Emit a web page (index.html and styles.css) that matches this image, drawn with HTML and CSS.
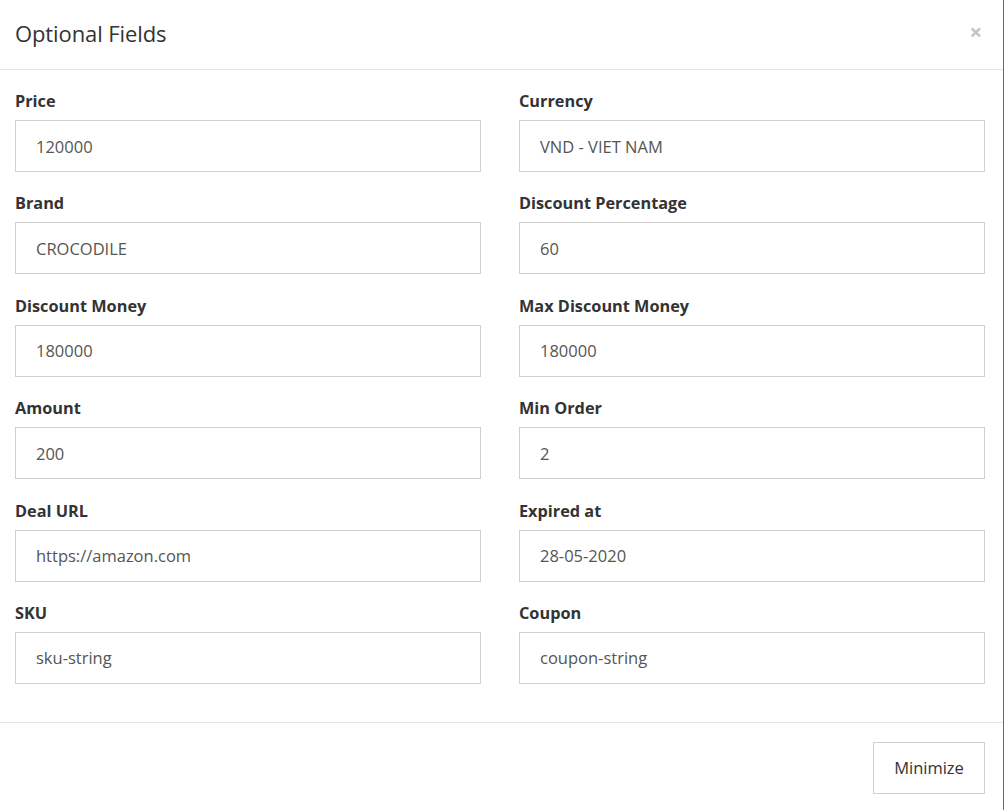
FILE: index.html
```html
<!DOCTYPE html>
<html>
<head>
<meta charset="utf-8">
<link rel="stylesheet" href="styles.css">
</head>
<body>
<div class="modal">
  <div class="modal-header">
    <h4 class="modal-title">Optional Fields</h4>
    <span class="close">&times;</span>
  </div>
  <div class="modal-body">
    <div class="field"><label>Price</label><div class="input">120000</div></div>
    <div class="field"><label>Currency</label><div class="input">VND - VIET NAM</div></div>
    <div class="field"><label>Brand</label><div class="input">CROCODILE</div></div>
    <div class="field"><label>Discount Percentage</label><div class="input">60</div></div>
    <div class="field"><label>Discount Money</label><div class="input">180000</div></div>
    <div class="field"><label>Max Discount Money</label><div class="input">180000</div></div>
    <div class="field"><label>Amount</label><div class="input">200</div></div>
    <div class="field"><label>Min Order</label><div class="input">2</div></div>
    <div class="field"><label>Deal URL</label><div class="input">https://amazon.com</div></div>
    <div class="field"><label>Expired at</label><div class="input">28-05-2020</div></div>
    <div class="field"><label>SKU</label><div class="input">sku-string</div></div>
    <div class="field"><label>Coupon</label><div class="input">coupon-string</div></div>
  </div>
  <div class="modal-footer">
    <button class="btn">Minimize</button>
  </div>
</div>
</body>
</html>
```
FILE: styles.css
```css
html, body {
  margin: 0;
  padding: 0;
  background: #ffffff;
}
body {
  font-family: "Open Sans", "Noto Sans", sans-serif;
  color: #333;
  overflow: hidden;
}
.modal {
  width: 1003px;
  height: 810px;
  border-right: 1px solid #6b6b6b;
  background: #fff;
  display: flex;
  flex-direction: column;
}
.modal-header {
  height: 70px;
  box-sizing: border-box;
  border-bottom: 1px solid #e5e5e5;
  display: flex;
  align-items: center;
  justify-content: space-between;
  padding: 0 21px 3px 15px;
}
.modal-title {
  margin: 0;
  font-weight: 400;
  font-size: 22px;
  color: #333;
  letter-spacing: -0.1px;
}
.close {
  font-size: 22px;
  font-weight: 700;
  color: #c2c2c2;
  line-height: 1;
  margin-top: -5px;
}
.modal-body {
  display: grid;
  grid-template-columns: 466px 466px;
  column-gap: 38px;
  row-gap: 19.4px;
  padding: 19px 18px 38px 15px;
}
.field {
  display: flex;
  flex-direction: column;
}
.field label {
  font-weight: 700;
  font-size: 16.3px;
  line-height: 24px;
  height: 24px;
  margin-bottom: 7px;
  color: #333;
}
.input {
  height: 52px;
  box-sizing: border-box;
  border: 1px solid #cfcfcf;
  padding: 0 20px;
  display: flex;
  align-items: center;
  font-size: 16.5px;
  color: #555;
}
.modal-footer {
  border-top: 1px solid #e5e5e5;
  padding: 19px 18px 0 15px;
  display: flex;
  justify-content: flex-end;
}
.btn {
  width: 112px;
  height: 52px;
  background: #fff;
  border: 1px solid #cfcfcf;
  font-family: "Open Sans", "Noto Sans", sans-serif;
  font-size: 16.5px;
  color: #333;
  padding: 0;
}
```
